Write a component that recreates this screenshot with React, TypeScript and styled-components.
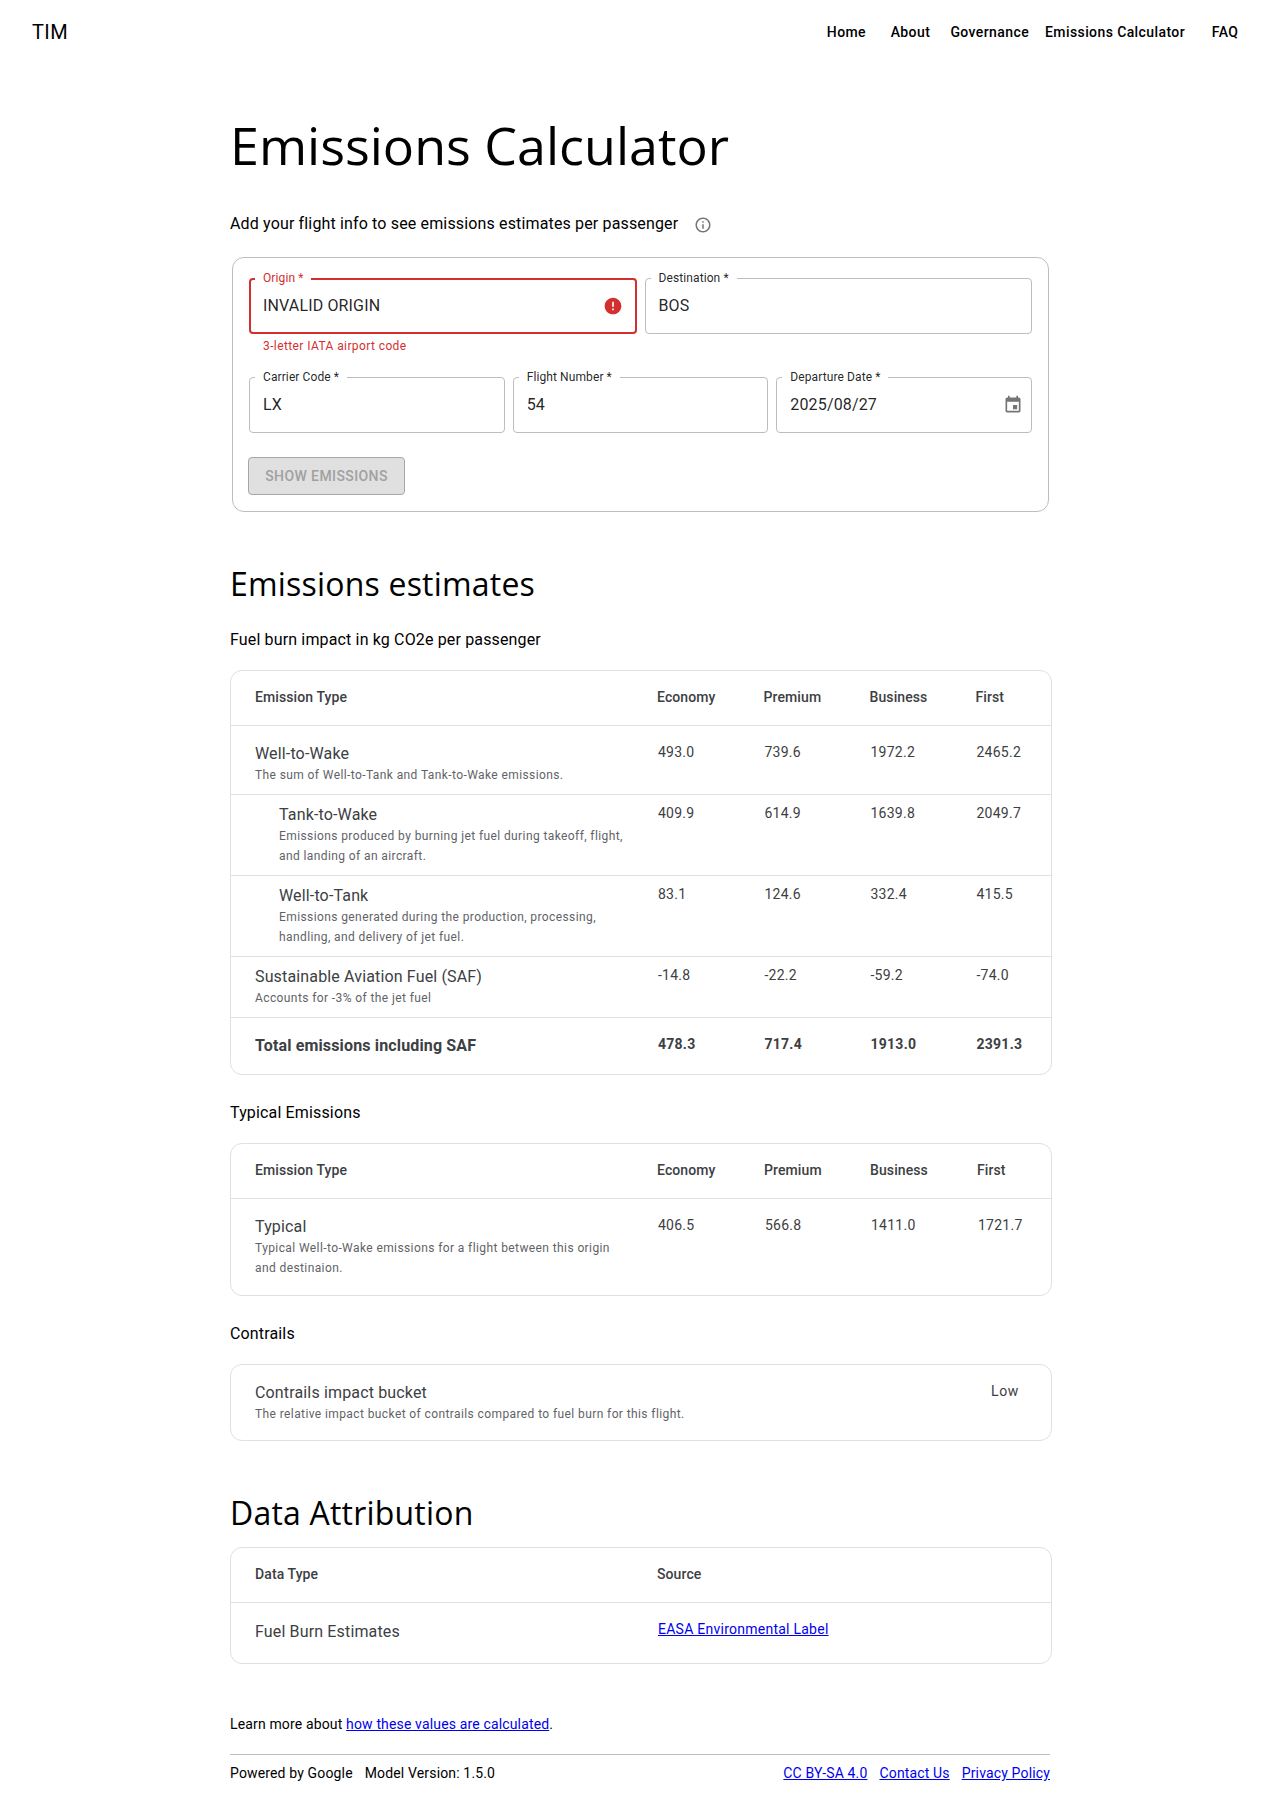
import React from "react";
import styled, { createGlobalStyle } from "styled-components";

const Global = createGlobalStyle`
  html, body { margin: 0; padding: 0; background: #fff; }
  body { font-family: Roboto, "Liberation Sans", sans-serif; color: rgba(0,0,0,.87); }
`;

const Page = styled.div`
  width: 1280px;
  height: 1807px;
  overflow: hidden;
`;
const TopBar = styled.header`
  display: flex;
  align-items: center;
  justify-content: space-between;
  height: 64px;
  padding: 0 23px 0 32px;
  box-sizing: border-box;
`;
const Logo = styled.div`
  font-size: 20px;
  font-weight: 400;
  letter-spacing: 0.4px;
  color: #000;
`;
const Nav = styled.nav`
  display: flex;
`;
const NavButton = styled.a`
  min-width: 64px;
  padding: 0 8px;
  box-sizing: border-box;
  text-align: center;
  font-size: 14px;
  font-weight: 500;
  letter-spacing: 0.4px;
  color: #000;
`;
const Main = styled.main`
  width: 820px;
  margin-left: 230px;
  padding-top: 49px;
`;
const Title = styled.h1`
  margin: 0;
  font-family: "Open Sans", sans-serif;
  font-weight: 400;
  font-size: 52px;
  line-height: 64px;
  color: #000;
`;
const Intro = styled.div`
  display: flex;
  align-items: center;
  margin-top: 35px;
  font-size: 16px;
  line-height: 24px;
  letter-spacing: 0.15px;
  color: #000;
`;
const InfoIcon = styled.svg`
  width: 18px;
  height: 18px;
  margin-left: 16px;
  margin-top: 2px;
  fill: #757575;
`;
const FormBox = styled.form`
  box-sizing: border-box;
  width: 817px;
  height: 255px;
  margin: 21px 0 0 2px;
  padding: 20px 16px 0 16px;
  border: 1px solid #bdbdbd;
  border-radius: 12px;
`;
const FieldRow = styled.div<{ $cols: number }>`
  display: grid;
  grid-template-columns: repeat(${(p) => p.$cols}, 1fr);
  gap: 8px;
`;
const Field = styled.div`
  position: relative;
`;
const FieldBox = styled.div<{ $error?: boolean; $pr: number }>`
  display: flex;
  align-items: center;
  justify-content: space-between;
  box-sizing: border-box;
  height: 56px;
  padding: 0 ${(p) => p.$pr}px 0 ${(p) => (p.$error ? "12px" : "13px")};
  border: ${(p) => (p.$error ? "2px solid #d32f2f" : "1px solid #bdbdbd")};
  border-radius: 4px;
  font-size: 16px;
  letter-spacing: 0.15px;
  color: rgba(0,0,0,.87);
`;
const FieldValue = styled.span`
  margin-bottom: 2px;
`;
const FieldLabel = styled.label<{ $error?: boolean }>`
  position: absolute;
  left: 6px;
  top: -7px;
  padding: 0 8px;
  background: #fff;
  font-size: 12px;
  line-height: 14px;
  letter-spacing: 0.1px;
  color: ${(p) => (p.$error ? "#d32f2f" : "rgba(0,0,0,.87)")};
`;
const Helper = styled.div`
  height: 43px;
  padding: 2px 0 0 14px;
  box-sizing: border-box;
  font-size: 12px;
  line-height: 20px;
  letter-spacing: 0.4px;
  color: #d32f2f;
`;
const FieldGlyph = styled.svg<{ $color: string }>`
  width: 20px;
  height: 20px;
  fill: ${(p) => p.$color};
  flex: none;
`;
const ShowButton = styled.button`
  display: block;
  width: 157px;
  height: 38px;
  margin: 24px 0 0 -1px;
  padding: 0;
  background: #e0e0e0;
  border: 1px solid #a6a6a6;
  border-radius: 4px;
  font-family: inherit;
  font-size: 14px;
  font-weight: 500;
  letter-spacing: 0.4px;
  color: #a0a0a0;
  text-transform: uppercase;
`;
const SectionTitle = styled.h2<{ $top: number }>`
  margin: ${(p) => p.$top}px 0 0;
  font-family: "Open Sans", sans-serif;
  font-weight: 400;
  font-size: 32px;
  line-height: 40px;
  letter-spacing: 0.2px;
  color: #000;
`;
const SubHead = styled.div<{ $top: number }>`
  margin-top: ${(p) => p.$top}px;
  font-size: 16px;
  line-height: 24px;
  letter-spacing: 0.15px;
  color: #000;
`;
const Card = styled.div<{ $top: number }>`
  box-sizing: border-box;
  width: 822px;
  margin-top: ${(p) => p.$top}px;
  border: 1px solid #e0e0e0;
  border-radius: 12px;
  overflow: hidden;
`;
const Table = styled.table`
  width: 100%;
  border-collapse: collapse;
  table-layout: fixed;
  color: #3c4043;
`;
const Col = styled.col<{ $w: number }>`
  width: ${(p) => p.$w}px;
`;
const Head = styled.th`
  height: 54px;
  padding: 0 0 2px 0;
  box-sizing: border-box;
  text-align: left;
  font-size: 14px;
  font-weight: 500;
  letter-spacing: 0.1px;
  border-bottom: 1px solid #e0e0e0;
  &:first-child { padding-left: 24px; }
`;
const Row = styled.tr<{ $h: number; $last?: boolean }>`
  height: ${(p) => p.$h}px;
  & > td { border-bottom: ${(p) => (p.$last ? "none" : "1px solid #e0e0e0")}; }
`;
const NameCell = styled.td<{ $indent?: boolean; $pt: number }>`
  vertical-align: top;
  box-sizing: border-box;
  padding: ${(p) => p.$pt + 1}px 24px 0 ${(p) => (p.$indent ? 48 : 24)}px;
`;
const Name = styled.div<{ $bold?: boolean }>`
  font-size: 16px;
  line-height: 22px;
  letter-spacing: 0.15px;
  font-weight: ${(p) => (p.$bold ? 700 : 400)};
`;
const Sub = styled.div`
  font-size: 12px;
  line-height: 20px;
  letter-spacing: 0.4px;
  color: #5f6368;
`;
const Value = styled.td<{ $pt: number; $bold?: boolean }>`
  vertical-align: top;
  box-sizing: border-box;
  padding-top: ${(p) => p.$pt}px;
  font-size: 14px;
  line-height: 20px;
  letter-spacing: 0.25px;
  font-weight: ${(p) => (p.$bold ? 700 : 400)};
`;
const BucketValue = styled(Value)`
  letter-spacing: 0.6px;
`;
const Link = styled.a`
  color: #0000ee;
  text-decoration: underline;
`;
const Learn = styled.div`
  margin-top: 50px;
  font-size: 14px;
  line-height: 20px;
  letter-spacing: 0.15px;
  color: #000;
`;
const Footer = styled.footer`
  display: flex;
  justify-content: space-between;
  margin-top: 20px;
  padding-top: 8px;
  border-top: 1px solid #bdbdbd;
  font-size: 14px;
  line-height: 20px;
  letter-spacing: 0.15px;
  color: #000;
`;
const FooterGroup = styled.div`
  display: flex;
  gap: 12px;
`;

const rows1 = [
  { name: "Well-to-Wake", sub: ["The sum of Well-to-Tank and Tank-to-Wake emissions."], v: ["493.0", "739.6", "1972.2", "2465.2"], h: 69, pt: 16 },
  { name: "Tank-to-Wake", sub: ["Emissions produced by burning jet fuel during takeoff, flight,", "and landing of an aircraft."], v: ["409.9", "614.9", "1639.8", "2049.7"], h: 81, pt: 8, indent: true },
  { name: "Well-to-Tank", sub: ["Emissions generated during the production, processing,", "handling, and delivery of jet fuel."], v: ["83.1", "124.6", "332.4", "415.5"], h: 81, pt: 8, indent: true },
  { name: "Sustainable Aviation Fuel (SAF)", sub: ["Accounts for -3% of the jet fuel"], v: ["-14.8", "-22.2", "-59.2", "-74.0"], h: 61, pt: 8 },
];

const infoPath = "M11 7h2v2h-2zm0 4h2v6h-2zm1-9C6.48 2 2 6.48 2 12s4.48 10 10 10 10-4.48 10-10S17.52 2 12 2zm0 18c-4.41 0-8-3.59-8-8s3.59-8 8-8 8 3.59 8 8-3.59 8-8 8z";
const errorPath = "M12 2C6.48 2 2 6.48 2 12s4.48 10 10 10 10-4.48 10-10S17.52 2 12 2zm1 15h-2v-2h2v2zm0-4h-2V7h2v6z";
const eventPath = "M17 12h-5v5h5v-5zM16 1v2H8V1H6v2H5c-1.11 0-1.99.9-1.99 2L3 19c0 1.1.89 2 2 2h14c1.1 0 2-.9 2-2V5c0-1.1-.9-2-2-2h-1V1h-2zm3 18H5V8h14v11z";

function Cols({ w }: { w: number[] }) {
  return (
    <colgroup>
      {w.map((x, i) => (
        <Col key={i} $w={x} />
      ))}
    </colgroup>
  );
}

function InputField({ label, value, error, glyph, pr = 13 }: { label: string; value: string; error?: boolean; glyph?: React.ReactNode; pr?: number }) {
  return (
    <Field>
      <FieldLabel $error={error}>{label} *</FieldLabel>
      <FieldBox $error={error} $pr={pr}>
        <FieldValue>{value}</FieldValue>
        {glyph}
      </FieldBox>
    </Field>
  );
}

export default function App() {
  return (
    <Page>
      <Global />
      <TopBar>
        <Logo>TIM</Logo>
        <Nav>
          {["Home", "About", "Governance", "Emissions Calculator", "FAQ"].map((n) => (
            <NavButton key={n}>{n}</NavButton>
          ))}
        </Nav>
      </TopBar>
      <Main>
        <Title>Emissions Calculator</Title>
        <Intro>
          Add your flight info to see emissions estimates per passenger
          <InfoIcon viewBox="0 0 24 24"><path d={infoPath} /></InfoIcon>
        </Intro>
        <FormBox>
          <FieldRow $cols={2}>
            <InputField label="Origin" value="INVALID ORIGIN" error pr={12} glyph={<FieldGlyph $color="#d32f2f" viewBox="0 0 24 24"><path d={errorPath} /></FieldGlyph>} />
            <InputField label="Destination" value="BOS" />
          </FieldRow>
          <Helper>3-letter IATA airport code</Helper>
          <FieldRow $cols={3}>
            <InputField label="Carrier Code" value="LX" />
            <InputField label="Flight Number" value="54" />
            <InputField label="Departure Date" value="2025/08/27" pr={8} glyph={<FieldGlyph $color="#757575" viewBox="0 0 24 24"><path d={eventPath} /></FieldGlyph>} />
          </FieldRow>
          <ShowButton type="button" disabled>Show Emissions</ShowButton>
        </FormBox>

        <SectionTitle $top={52}>Emissions estimates</SectionTitle>
        <SubHead $top={24}>Fuel burn impact in kg CO2e per passenger</SubHead>
        <Card $top={18}>
          <Table>
            <Cols w={[426, 106.5, 106, 106, 75.5]} />
            <thead>
              <tr>
                {["Emission Type", "Economy", "Premium", "Business", "First"].map((h) => (
                  <Head key={h}>{h}</Head>
                ))}
              </tr>
            </thead>
            <tbody>
              {rows1.map((r) => (
                <Row key={r.name} $h={r.h}>
                  <NameCell $indent={r.indent} $pt={r.pt}>
                    <Name>{r.name}</Name>
                    {r.sub.map((s) => <Sub key={s}>{s}</Sub>)}
                  </NameCell>
                  {r.v.map((v, i) => <Value key={i} $pt={r.pt}>{v}</Value>)}
                </Row>
              ))}
              <Row $h={57} $last>
                <NameCell $pt={16}><Name $bold>Total emissions including SAF</Name></NameCell>
                {["478.3", "717.4", "1913.0", "2391.3"].map((v) => <Value key={v} $pt={16} $bold>{v}</Value>)}
              </Row>
            </tbody>
          </Table>
        </Card>

        <SubHead $top={26}>Typical Emissions</SubHead>
        <Card $top={18}>
          <Table>
            <Cols w={[426, 107, 106, 107, 74]} />
            <thead>
              <tr>
                {["Emission Type", "Economy", "Premium", "Business", "First"].map((h) => (
                  <Head key={h}>{h}</Head>
                ))}
              </tr>
            </thead>
            <tbody>
              <Row $h={97} $last>
                <NameCell $pt={16}>
                  <Name>Typical</Name>
                  <Sub>Typical Well-to-Wake emissions for a flight between this origin</Sub>
                  <Sub>and destinaion.</Sub>
                </NameCell>
                {["406.5", "566.8", "1411.0", "1721.7"].map((v) => <Value key={v} $pt={16}>{v}</Value>)}
              </Row>
            </tbody>
          </Table>
        </Card>

        <SubHead $top={26}>Contrails</SubHead>
        <Card $top={18}>
          <Table>
            <Cols w={[759, 61]} />
            <tbody>
              <Row $h={75} $last>
                <NameCell $pt={16}>
                  <Name>Contrails impact bucket</Name>
                  <Sub>The relative impact bucket of contrails compared to fuel burn for this flight.</Sub>
                </NameCell>
                <BucketValue $pt={16}>Low</BucketValue>
              </Row>
            </tbody>
          </Table>
        </Card>

        <SectionTitle $top={52}>Data Attribution</SectionTitle>
        <Card $top={14}>
          <Table>
            <Cols w={[426, 394]} />
            <thead>
              <tr>
                <Head>Data Type</Head>
                <Head>Source</Head>
              </tr>
            </thead>
            <tbody>
              <Row $h={61} $last>
                <NameCell $pt={17}><Name>Fuel Burn Estimates</Name></NameCell>
                <Value $pt={16}><Link href="#">EASA Environmental Label</Link></Value>
              </Row>
            </tbody>
          </Table>
        </Card>

        <Learn>Learn more about <Link href="#">how these values are calculated</Link>.</Learn>
        <Footer>
          <FooterGroup>
            <span>Powered by Google</span>
            <span>Model Version: 1.5.0</span>
          </FooterGroup>
          <FooterGroup>
            <Link href="#">CC BY-SA 4.0</Link>
            <Link href="#">Contact Us</Link>
            <Link href="#">Privacy Policy</Link>
          </FooterGroup>
        </Footer>
      </Main>
    </Page>
  );
}
